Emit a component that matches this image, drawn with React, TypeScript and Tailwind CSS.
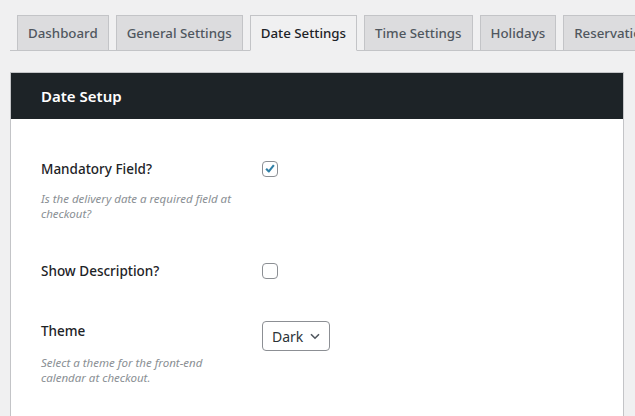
import React from 'react';

const TABS = ['Dashboard', 'General Settings', 'Date Settings', 'Time Settings', 'Holidays', 'Reservation Table'];

const font = { fontFamily: '"Noto Sans", "Open Sans", sans-serif' };

function Checkbox({ checked }: { checked?: boolean }) {
    return (
        <span className="flex h-4 w-4 items-center justify-center rounded-[4px] border border-[#8c8f94] bg-white">
            {checked && (
                <svg width="16" height="16" viewBox="0 0 16 16" className="-mt-px">
                    <path d="M3.6 7.6l3.1 3.2 5.7-7.2" fill="none" stroke="#2f7fa6" strokeWidth="2.4" strokeLinejoin="round" />
                </svg>
            )}
        </span>
    );
}

function Row({ label, desc, descGap = 'mt-[12px]', children }: { label: string; desc?: string; descGap?: string; children: React.ReactNode }) {
    return (
        <div className="flex py-[14px]">
            <div className="w-[221px] shrink-0">
                <div className="text-[13.5px] font-medium leading-[20px] text-[#1d2327]">{label}</div>
                {desc && (
                    <p className={`${descGap} w-[200px] text-[11.5px] italic leading-[15px] text-[#8a8f94]`}>{desc}</p>
                )}
            </div>
            <div className="pt-[2px]">{children}</div>
        </div>
    );
}

export default function App() {
    return (
        <div className="h-[416px] w-[635px] overflow-hidden bg-[#f0f0f1]" style={font}>
            {/* Tabs */}
            <div className="ml-[10px] flex w-[640px] items-end gap-[7px] border-b border-[#c3c4c7] pl-[7px] pt-[15px]">
                {TABS.map(tab => (
                    <div
                        key={tab}
                        className={`-mb-px shrink-0 whitespace-nowrap border border-[#c3c4c7] px-[10px] py-[6px] text-[13.3px] font-medium leading-[22px] ${
                            tab === 'Date Settings'
                                ? 'border-b-[#f0f0f1] bg-[#f0f0f1] text-[#1d2327]'
                                : 'bg-[#dcdcde] text-[#50575e]'
                        }`}
                    >
                        {tab}
                    </div>
                ))}
            </div>

            {/* Panel */}
            <div className="ml-[10px] mt-[21px] w-[614px] border border-[#c3c4c7] bg-white">
                <div className="bg-[#1d2327] px-[30px] py-[13px] text-[15px] font-semibold leading-[20px] text-white">
                    Date Setup
                </div>
                <div className="px-[30px] pb-[60px] pt-[26px]">
                    <Row label="Mandatory Field?" desc="Is the delivery date a required field at checkout?">
                        <Checkbox checked />
                    </Row>
                    <div className="h-[12px]" />
                    <Row label="Show Description?">
                        <Checkbox />
                    </Row>
                    <div className="h-[12px]" />
                    <Row label="Theme" desc="Select a theme for the front-end calendar at checkout." descGap="mt-[14px]">
                        <div className="-mt-[2px] flex h-[30px] w-[68px] items-center justify-between rounded-[4px] border border-[#8c8f94] bg-white pl-[9px] pr-[8px] text-[14px] text-[#2c3338]">
                            <span>Dark</span>
                            <svg width="12" height="12" viewBox="0 0 12 12" fill="none" stroke="#50575e" strokeWidth="1.6">
                                <path d="M2 4.2l4 4 4-4" />
                            </svg>
                        </div>
                    </Row>
                </div>
            </div>
        </div>
    );
}
